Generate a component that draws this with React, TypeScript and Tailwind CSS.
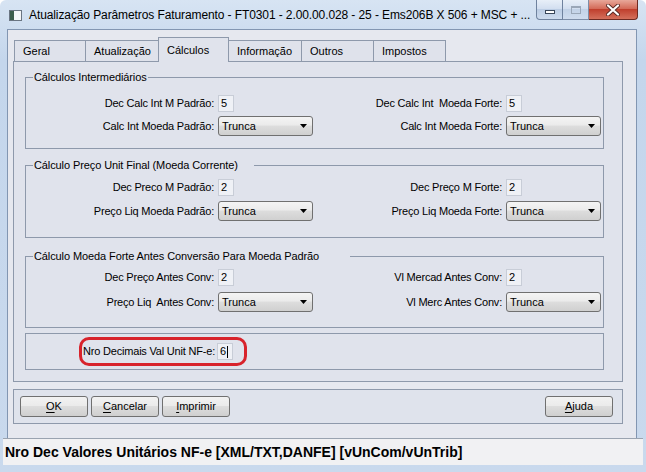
import React from "react";

const tabs = ["Geral", "Atualização", "Cálculos", "Informação", "Outros", "Impostos"];
const tabWidths = ["w-[72px]", "w-[74px]", "w-[71px]", "w-[74px]", "w-[73px]", "w-[73px]"];

function Field({ value, cursor }: { value: string; cursor?: boolean }) {
  return (
    <div className="w-[16px] h-[17px] flex items-center border border-[#c8cdd7] bg-[#eff1f6] pl-[2px] text-[11px] text-black">
      {value}
      {cursor && <span className="ml-px h-[12px] w-px bg-black" />}
    </div>
  );
}

function Combo() {
  return (
    <div className="w-[95px] h-[20px] flex items-center justify-between rounded-[3px] border border-[#707070] bg-[linear-gradient(#f4f4f4,#ebebeb_45%,#dddddd_50%,#d0d0d0)] pl-[3px] pr-[5px] text-[11px] text-black">
      <span>Trunca</span>
      <svg width="7" height="4" viewBox="0 0 7 4">
        <path d="M0 0h7L3.5 4z" fill="#000" />
      </svg>
    </div>
  );
}

function Label({ text }: { text: string }) {
  return <span className="text-right text-[11px] tracking-[-0.2px] whitespace-pre text-black">{text}</span>;
}

type Row = [string, string, string, string];

function Group({
  title,
  titlePad,
  rows,
  box,
  gap,
}: {
  title: string;
  titlePad: string;
  rows: Row[];
  box: string;
  gap: string;
}) {
  return (
    <fieldset className={`border border-[#8e99ab] ${box}`}>
      <legend className={`ml-[7px] pl-px ${titlePad} text-[11px] leading-[13px] tracking-[-0.1px] text-black`}>{title}</legend>
      <div className="grid grid-cols-[188px_95px_185px_95px] gap-x-[4px] items-center">
        <Label text={rows[0][0]} />
        <Field value={rows[0][1]} />
        <Label text={rows[0][2]} />
        <Field value={rows[0][3]} />
      </div>
      <div className={`${gap} grid grid-cols-[188px_95px_185px_95px] gap-x-[4px] items-center`}>
        <Label text={rows[1][0]} />
        <Combo />
        <Label text={rows[1][2]} />
        <Combo />
      </div>
    </fieldset>
  );
}

function Button({ first, rest }: { first: string; rest: string }) {
  return (
    <div className="w-[68px] h-[21px] flex items-center justify-center rounded-[3px] border border-[#707070] bg-[linear-gradient(#f2f2f2,#ebebeb_45%,#dddddd_50%,#cfcfcf)] text-[11px] text-black">
      <span>
        <span className="underline underline-offset-2">{first}</span>
        {rest}
      </span>
    </div>
  );
}

export default function App() {
  return (
    <div className="w-[646px] h-[472px] flex flex-col overflow-hidden rounded-t-[6px] bg-[linear-gradient(#d7e4f3,#c4d6ec_60px,#c9d9ed)] font-['Liberation_Sans',Arial,sans-serif]">
      {/* title bar */}
      <div className="h-[29px] flex shrink-0">
        <div className="flex items-center pl-[9px] pt-px">
          <svg width="13" height="11" viewBox="0 0 13 11">
            <rect x="0.5" y="0.5" width="12" height="10" fill="#f4f6f8" stroke="#6a7582" />
            <rect x="1" y="1" width="4" height="9" fill="#3c5d4c" />
          </svg>
          <span className="ml-[7px] text-[12px] tracking-[-0.1px] text-black">
            Atualização Parâmetros Faturamento - FT0301 - 2.00.00.028 - 25 - Ems206B X 506 + MSC + ...
          </span>
        </div>
        <div className="ml-auto mr-[8px] flex h-[20px]">
          <div className="w-[27px] flex items-end justify-center pb-[5px] rounded-bl-[4px] border border-t-0 border-[#6f829e] bg-[linear-gradient(#e8eff8,#d3dff0_45%,#bccde4_50%,#cddbee)]">
            <div className="w-[10px] h-[4px] border border-[#39475a] bg-white" />
          </div>
          <div className="w-[26px] flex items-center justify-center border-b border-r border-[#7d8ea8] bg-[linear-gradient(#e8eff8,#d3dff0_45%,#c2d2e7_50%,#cfdcee)]">
            <div className="w-[10px] h-[8px] border border-[#9aa7b8] border-t-2" />
          </div>
          <div className="w-[49px] flex items-center justify-center rounded-br-[4px] border border-t-0 border-l-0 border-[#6e2a22] bg-[linear-gradient(#e8a89a,#d46b59_45%,#c0402e_50%,#d4705c)]">
            <svg width="14" height="12" viewBox="0 0 14 12">
              <path d="M2 1.5L12 10.5M12 1.5L2 10.5" stroke="#5a2b26" strokeWidth="4" strokeLinecap="round" />
              <path d="M2 1.5L12 10.5M12 1.5L2 10.5" stroke="#fff" strokeWidth="2.2" strokeLinecap="round" />
            </svg>
          </div>
        </div>
      </div>

      {/* client area */}
      <div className="ml-[7px] mr-[9px] h-[409px] shrink-0 flex flex-col border border-b-0 border-[#8296b2] bg-[#e6e8ef] pl-[5px] pr-[13px]">
        <div className="h-[31px] shrink-0 flex items-end pl-px">
          {tabs.map((t, i) =>
            t === "Cálculos" ? (
              <div
                key={t}
                className={`${tabWidths[i]} relative z-10 -ml-px -mb-px h-[25px] flex items-center pl-[8px] border border-b-0 border-[#8e99ab] bg-[#e0e3ec] text-[11px] text-black`}
              >
                {t}
              </div>
            ) : (
              <div
                key={t}
                className={`${tabWidths[i]} ${i === 0 ? "" : "-ml-px"} h-[21px] flex items-center pl-[8px] border border-b-0 border-[#8e99ab] bg-[#dfe2eb] text-[11px] text-black`}
              >
                {t}
              </div>
            )
          )}
        </div>

        {/* tab panel */}
        <div className="h-[321px] shrink-0 border border-[#8e99ab] bg-[#e0e3ec] pt-[9px] pl-[11px] pr-[18px]">
          <Group
            title="Cálculos Intermediários"
            titlePad="pr-px"
            box="h-[78px] pt-[11px]"
            gap="mt-[4px]"
            rows={[
              ["Dec Calc Int M Padrão:", "5", "Dec Calc Int  Moeda Forte:", "5"],
              ["Calc Int Moeda Padrão:", "", "Calc Int Moeda Forte:", ""],
            ]}
          />
          <div className="mt-[10px]">
            <Group
              title="Cálculo Preço Unit Final (Moeda Corrente)"
              titlePad="pr-[16px]"
              box="h-[79px] pt-[7px]"
              gap="mt-[5px]"
              rows={[
                ["Dec Preco M Padrão:", "2", "Dec Preço M Forte:", "2"],
                ["Preço Liq Moeda Padrão:", "", "Preço Liq Moeda Forte:", ""],
              ]}
            />
          </div>
          <div className="mt-[12px]">
            <Group
              title="Cálculo Moeda Forte Antes Conversão Para Moeda Padrão"
              titlePad="pr-[31px]"
              box="h-[78px] pt-[6px]"
              gap="mt-[6px]"
              rows={[
                ["Dec Preço Antes Conv:", "2", "Vl Mercad Antes Conv:", "2"],
                ["Preço Liq  Antes Conv:", "", "Vl Merc Antes Conv:", ""],
              ]}
            />
          </div>
          <div className="mt-[5px] h-[37px] flex items-center border border-[#8e99ab] pl-[53px]">
            <div className="w-[168px] h-[29px] flex items-center justify-end gap-[2px] pr-[11px] rounded-[10px] border-[3px] border-[#d8232c]">
              <Label text="Nro Decimais Val Unit NF-e:" />
              <Field value="6" cursor />
            </div>
          </div>
        </div>

        {/* buttons */}
        <div className="mt-[7px] h-[35px] shrink-0 flex items-center gap-[3px] border border-[#8e99ab] bg-[#dfe3ec] pl-[6px] pr-[9px]">
          <Button first="O" rest="K" />
          <Button first="C" rest="ancelar" />
          <Button first="I" rest="mprimir" />
          <div className="ml-auto">
            <Button first="A" rest="juda" />
          </div>
        </div>
      </div>

      {/* status bar */}
      <div className="mx-[3px] h-[27px] shrink-0 flex items-center border-t border-[#9aa3b0] bg-[#f1f1f3] pl-[2px] text-[14px] font-bold text-black">
        Nro Dec Valores Unitários NF-e [XML/TXT,DANFE] [vUnCom/vUnTrib]
      </div>
    </div>
  );
}
